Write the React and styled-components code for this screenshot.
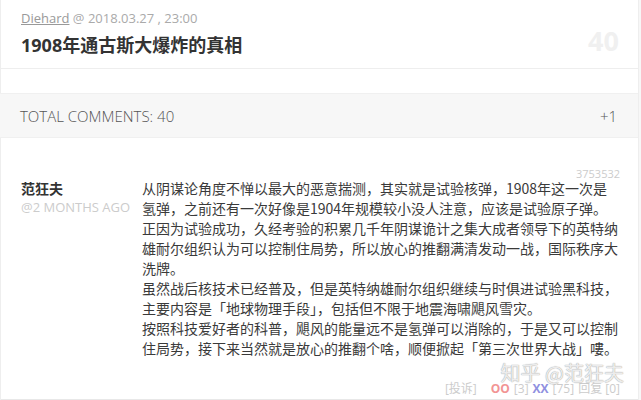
import React from 'react';
import styled, { createGlobalStyle } from 'styled-components';

const GlobalStyle = createGlobalStyle`
  body {
    margin: 0;
    background: #f7f7f7;
    font-family: "Open Sans", "Noto Sans CJK SC", sans-serif;
  }
`;

const lines = [
  '从阴谋论角度不惮以最大的恶意揣测，其实就是试验核弹，1908年这一次是',
  '氢弹，之前还有一次好像是1904年规模较小没人注意，应该是试验原子弹。',
  '正因为试验成功，久经考验的积累几千年阴谋诡计之集大成者领导下的英特纳',
  '雄耐尔组织认为可以控制住局势，所以放心的推翻满清发动一战，国际秩序大',
  '洗牌。',
  '虽然战后核技术已经普及，但是英特纳雄耐尔组织继续与时俱进试验黑科技，',
  '主要内容是「地球物理手段」，包括但不限于地震海啸飓风雪灾。',
  '按照科技爱好者的科普，飓风的能量远不是氢弹可以消除的，于是又可以控制',
  '住局势，接下来当然就是放心的推翻个啥，顺便掀起「第三次世界大战」嘍。',
];

const App = () => {
  return (
    <>
      <GlobalStyle />
      <Page>
        <Header>
          <HeaderMain>
            <Meta>
              <Author>Diehard</Author> @ 2018.03.27 , 23:00
            </Meta>
            <Title>1908年通古斯大爆炸的真相</Title>
          </HeaderMain>
          <BigCount>40</BigCount>
        </Header>
        <Spacer />
        <TotalBar>
          <span>TOTAL COMMENTS: 40</span>
          <span>+1</span>
        </TotalBar>
        <Comment>
          <Who>
            <Name>范狂夫</Name>
            <Ago>@2 MONTHS AGO</Ago>
          </Who>
          <Body>
            <CommentId>3753532</CommentId>
            <Text>
              {lines.map((l, i) => (
                <Line key={i}>{l}</Line>
              ))}
            </Text>
            <Actions>
              <span>[投诉]</span>
              <Vote $color="#f29494">OO</Vote>
              <span>[3]</span>
              <Vote $color="#9090e0">XX</Vote>
              <span>[75]</span>
              <span>回复 [0]</span>
            </Actions>
          </Body>
          <Watermark>知乎 @范狂夫</Watermark>
        </Comment>
      </Page>
    </>
  );
};

const Page = styled.div`
  width: 637px;
  background: #fff;
  border-left: 1px solid #eee;
  border-right: 1px solid #eee;
`;

const Header = styled.div`
  display: flex;
  justify-content: space-between;
  align-items: flex-end;
  padding: 10px 20px 12px 20px;
  border-bottom: 1px solid #eee;
`;

const HeaderMain = styled.div`
  display: flex;
  flex-direction: column;
  gap: 8px;
`;

const Meta = styled.div`
  font-size: 13px;
  line-height: 16px;
  color: #aaa;
`;

const Author = styled.span`
  text-decoration: underline;
  color: #999;
`;

const Title = styled.h1`
  margin: 0;
  font-size: 18px;
  line-height: 22px;
  font-weight: 700;
  color: #333;
`;

const BigCount = styled.div`
  font-size: 27px;
  font-weight: 700;
  line-height: 30px;
  color: #f0f0f0;
  margin-right: -1px;
`;

const Spacer = styled.div`
  height: 24px;
`;

const TotalBar = styled.div`
  display: flex;
  justify-content: space-between;
  align-items: center;
  height: 43px;
  padding: 0 21px 0 20px;
  margin-left: -1px;
  background: #f7f7f7;
  border-top: 1px solid #f0f0f0;
  border-bottom: 1px solid #f0f0f0;
  font-size: 15px;
  font-weight: 300;
  color: #555;
`;

const Comment = styled.div`
  position: relative;
  display: grid;
  grid-template-columns: 121px 1fr;
  padding: 31px 18px 2px 20px;
  border-bottom: 1px solid #e8e8e8;
`;

const Who = styled.div`
  display: flex;
  flex-direction: column;
  padding-top: 10px;
`;

const Name = styled.div`
  font-size: 14px;
  line-height: 20px;
  font-weight: 700;
  color: #333;
`;

const Ago = styled.div`
  font-size: 13px;
  line-height: 16px;
  color: #ccc;
`;

const Body = styled.div`
  display: flex;
  flex-direction: column;
`;

const CommentId = styled.div`
  align-self: flex-end;
  font-size: 11px;
  line-height: 10px;
  color: #ccc;
  margin-bottom: -1px;
`;

const Text = styled.div`
  font-family: "Noto Sans CJK SC", sans-serif;
  font-size: 14px;
  line-height: 20px;
  color: #3a3a3a;
`;

const Line = styled.div`
  white-space: nowrap;
`;

const Actions = styled.div`
  display: flex;
  justify-content: flex-end;
  gap: 4px;
  margin-top: 23px;
  font-size: 12px;
  line-height: 16px;
  color: #ccc;

  & > span:first-child {
    margin-right: 10px;
  }
`;

const Vote = styled.span`
  color: ${p => p.$color};
  font-weight: 700;
`;

const Watermark = styled.div`
  position: absolute;
  right: 14px;
  bottom: 14px;
  font-family: "Noto Sans CJK SC", sans-serif;
  font-size: 20px;
  line-height: 24px;
  color: rgba(255, 255, 255, 0.8);
  text-shadow: 0 0 1px #aaa, 0 0 1px #aaa;
  pointer-events: none;
`;

export default App;
